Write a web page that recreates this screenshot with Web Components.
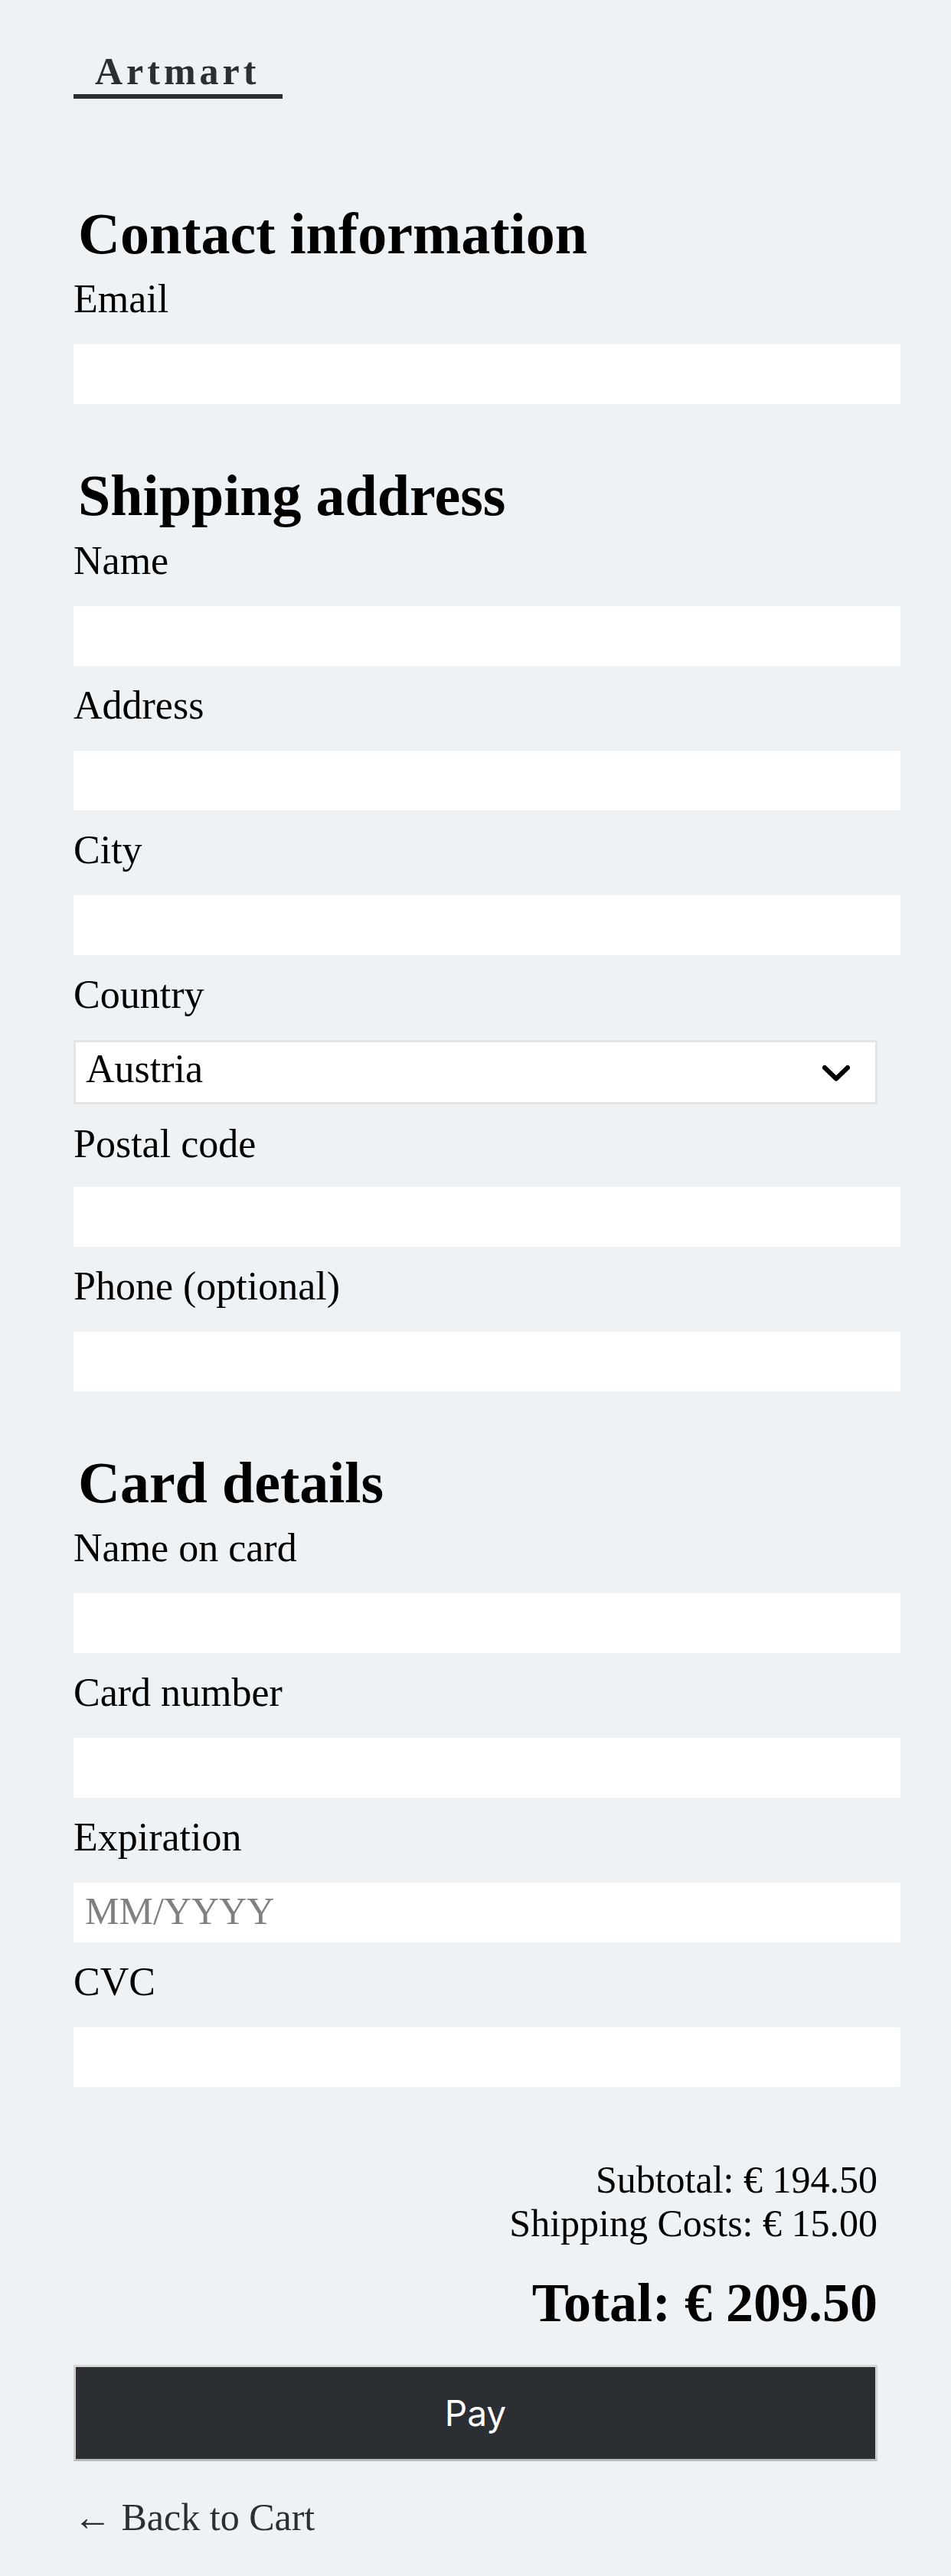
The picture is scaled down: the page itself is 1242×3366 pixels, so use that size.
<!DOCTYPE html>
<html lang="en">
<head>
<meta charset="utf-8">
<meta name="viewport" content="width=device-width, initial-scale=1">
<title>Artmart – Checkout</title>
<style>
  html { background: #eef2f5; }
  body {
    margin: 0;
    color: #000;
    font-family: "Liberation Serif", serif;
    font-size: 52px;
    line-height: 58px;
    --ink: #2b2e32;
  }
</style>
</head>
<body>
<checkout-page>
  <shop-logo slot="header">Artmart</shop-logo>
  <form-section heading="Contact information">
    <text-field label="Email" type="email"></text-field>
  </form-section>
  <form-section heading="Shipping address">
    <text-field label="Name"></text-field>
    <text-field label="Address"></text-field>
    <text-field label="City"></text-field>
    <select-field label="Country" options="Austria,Germany,Switzerland"></select-field>
    <text-field label="Postal code" compact></text-field>
    <text-field label="Phone (optional)" type="tel"></text-field>
  </form-section>
  <form-section heading="Card details">
    <text-field label="Name on card"></text-field>
    <text-field label="Card number"></text-field>
    <text-field label="Expiration" placeholder="MM/YYYY"></text-field>
    <text-field label="CVC"></text-field>
  </form-section>
  <order-summary subtotal="€ 194.50" shipping="€ 15.00" total="€ 209.50"></order-summary>
  <pay-button>Pay</pay-button>
  <back-link href="#cart">← Back to Cart</back-link>
</checkout-page>

<script>
  class ShadowElement extends HTMLElement {
    constructor() {
      super();
      this.attachShadow({ mode: 'open' });
    }
    connectedCallback() {
      this.shadowRoot.innerHTML = this.render();
    }
    text(name) {
      return this.getAttribute(name) || '';
    }
  }

  customElements.define('checkout-page', class extends ShadowElement {
    render() {
      return `
        <style>
          :host { display: block; padding: 64px 96px 48px; }
          main { display: flex; flex-direction: column; }
        </style>
        <header><slot name="header"></slot></header>
        <main><slot></slot></main>`;
    }
  });

  customElements.define('shop-logo', class extends ShadowElement {
    render() {
      return `
        <style>
          :host { display: flex; }
          a {
            padding: 0 30px 1px 28px;
            border-bottom: 6px solid var(--ink);
            color: var(--ink);
            font-size: 50px;
            font-weight: bold;
            letter-spacing: 5px;
            text-decoration: none;
          }
        </style>
        <a href="#home"><slot></slot></a>`;
    }
  });

  customElements.define('form-section', class extends ShadowElement {
    render() {
      return `
        <style>
          :host { display: block; padding-top: 76px; }
          :host(:first-of-type) { padding-top: 133px; }
          h2 { margin: 0 6px 14px; font-size: 76px; line-height: 86px; }
          div { display: flex; flex-direction: column; gap: 23px; }
        </style>
        <h2>${this.text('heading')}</h2>
        <div><slot></slot></div>`;
    }
  });

  customElements.define('text-field', class extends ShadowElement {
    render() {
      return `
        <style>
          :host { display: flex; flex-direction: column; gap: 30px; }
          :host([compact]) { gap: 27px; }
          input {
            box-sizing: content-box;
            width: 100%;
            height: 74px;
            margin: 0;
            padding: 0 15px 4px;
            border: 0;
            border-radius: 0;
            background: #fff;
            color: inherit;
            font-family: inherit;
            font-size: 50px;
          }
          input::placeholder { color: #808080; opacity: 1; }
        </style>
        <label for="control">${this.text('label')}</label>
        <input id="control" type="${this.text('type') || 'text'}" placeholder="${this.text('placeholder')}">`;
    }
  });

  customElements.define('select-field', class extends ShadowElement {
    render() {
      const options = this.text('options').split(',').map(o => `<option>${o}</option>`).join('');
      return `
        <style>
          :host { display: flex; flex-direction: column; gap: 30px; }
          .box { display: grid; align-items: center; }
          .box > * { grid-area: 1 / 1; }
          select {
            appearance: none;
            box-sizing: border-box;
            width: 100%;
            height: 84px;
            margin: 0;
            padding: 0 80px 9px 13px;
            border: 3px solid #e4e4e4;
            border-radius: 0;
            background: #fff;
            color: inherit;
            font-family: inherit;
            font-size: 52px;
          }
          svg { justify-self: end; margin-right: 36px; pointer-events: none; }
        </style>
        <label for="control">${this.text('label')}</label>
        <div class="box">
          <select id="control">${options}</select>
          <svg width="36" height="24" viewBox="0 0 36 24" fill="none" stroke="#000" stroke-width="6" stroke-linecap="round" stroke-linejoin="round" aria-hidden="true"><path d="M3 6L18 20.500L33 6"/></svg>
        </div>`;
    }
  });

  customElements.define('order-summary', class extends ShadowElement {
    render() {
      return `
        <style>
          :host { display: block; padding-top: 93px; text-align: right; font-size: 50px; line-height: 57px; }
          p { margin: 0; }
          .total { margin: 32px 0 38px; font-size: 72px; line-height: 86px; font-weight: bold; }
        </style>
        <p>Subtotal: ${this.text('subtotal')}</p>
        <p>Shipping Costs: ${this.text('shipping')}</p>
        <p class="total">Total: ${this.text('total')}</p>`;
    }
  });

  customElements.define('pay-button', class extends ShadowElement {
    render() {
      return `
        <style>
          :host { display: block; }
          button {
            display: block;
            box-sizing: border-box;
            width: 100%;
            height: 126px;
            margin: 0;
            padding: 0;
            border: 3px solid;
            border-color: #d8d8d8 #d0d0d0 #bababa;
            border-radius: 0;
            background: var(--ink);
            color: #fff;
            font-family: Inter, sans-serif;
            font-size: 46px;
          }
        </style>
        <button type="submit"><slot></slot></button>`;
    }
  });

  customElements.define('back-link', class extends ShadowElement {
    render() {
      return `
        <style>
          :host { display: block; padding-top: 44px; font-size: 50px; }
          a { color: var(--ink); text-decoration: none; }
        </style>
        <a href="${this.text('href')}"><slot></slot></a>`;
    }
  });
</script>
</body>
</html>
